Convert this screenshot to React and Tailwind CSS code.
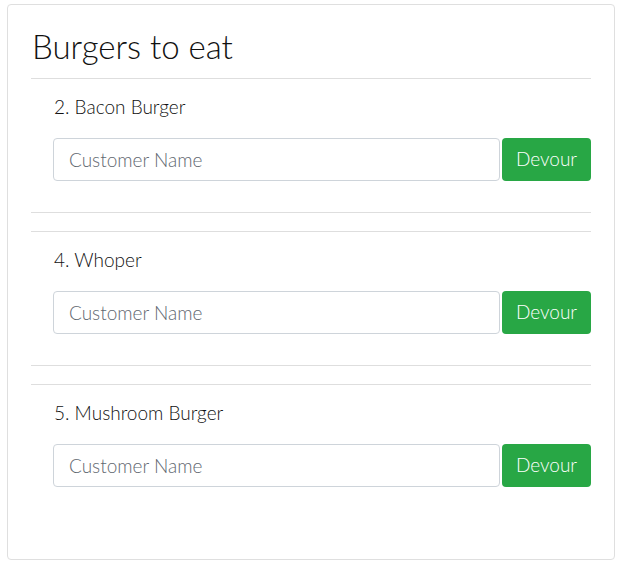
import React from "react";

const burgers = ["2. Bacon Burger", "4. Whoper", "5. Mushroom Burger"];

export default function App() {
  return (
    <div className="bg-white min-h-[574px] pt-[4px] pl-[7px]" style={{ fontFamily: 'Lato, "Noto Sans", sans-serif' }}>
      <div className="w-[608px] h-[556px] border border-[#dfdfdf] rounded-[4px] px-[23px] pt-[22px] text-[#212529]">
        <h2 className="text-[33px] leading-[38px] font-light text-[#111] pl-[1px]">Burgers to eat</h2>
        <hr className="mt-[13px] border-0 border-t border-[#dedede]" />
        {burgers.map((b, i) => (
          <div key={b}>
            <div className="pl-[22px] pt-[16px]">
              <div className="text-[19px] leading-[24px] font-light text-[#111] pl-[1px]">{b}</div>
              <div className="flex mt-[19px] h-[43px] gap-[2px]">
                <input
                  type="text"
                  placeholder="Customer Name"
                  className="w-[447px] h-[43px] border border-[#ced4da] rounded-[4px] px-[15px] text-[19px] font-light text-[#495057] placeholder:text-[#5f6870] outline-none"
                />
                <button className="w-[89px] h-[43px] bg-[#28a745] text-white text-[19px] font-light rounded-[4px]">Devour</button>
              </div>
            </div>
            {i < burgers.length - 1 && (
              <>
                <hr className="mt-[31px] border-0 border-t border-[#dedede]" />
                <hr className="mt-[18px] border-0 border-t border-[#dedede]" />
              </>
            )}
          </div>
        ))}
      </div>
    </div>
  );
}
